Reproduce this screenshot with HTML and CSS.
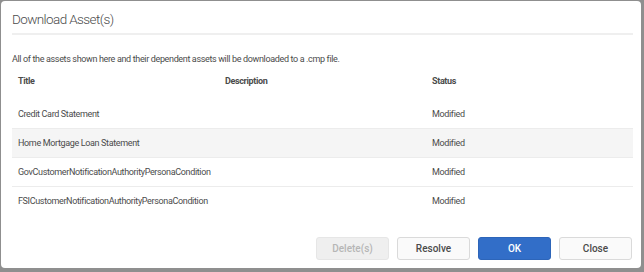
FILE: index.html
```html
<!DOCTYPE html>
<html lang="en">
<head>
    <meta charset="UTF-8">
    <meta name="viewport" content="width=device-width, initial-scale=1.0">
    <title>Download Asset(s)</title>
    <link rel="stylesheet" href="styles.css">
</head>
<body>
    <div class="dialog">
        <div class="dialog-header">
            <h2>Download Asset(s)</h2>
        </div>

        <p class="intro">All of the assets shown here and their dependent assets will be downloaded to a .cmp file.</p>

        <!-- Asset list -->
        <table class="asset-table">
            <thead>
                <tr>
                    <th>Title</th>
                    <th>Description</th>
                    <th>Status</th>
                </tr>
            </thead>
            <tbody>
                <tr>
                    <td>Credit Card Statement</td>
                    <td></td>
                    <td>Modified</td>
                </tr>
                <tr class="odd">
                    <td>Home Mortgage Loan Statement</td>
                    <td></td>
                    <td>Modified</td>
                </tr>
                <tr>
                    <td>GovCustomerNotificationAuthorityPersonaCondition</td>
                    <td></td>
                    <td>Modified</td>
                </tr>
                <tr class="last">
                    <td>FSICustomerNotificationAuthorityPersonaCondition</td>
                    <td></td>
                    <td>Modified</td>
                </tr>
            </tbody>
        </table>

        <div class="dialog-footer">
            <button class="btn" disabled>Delete(s)</button>
            <button class="btn">Resolve</button>
            <button class="btn btn-primary">OK</button>
            <button class="btn">Close</button>
        </div>
    </div>
</body>
</html>
```

FILE: styles.css
```css
html, body {
    margin: 0;
    height: 100%;
}
body {
    background: #8f8f8f;
    font-family: Roboto, "Noto Sans", sans-serif;
    color: #4b4b4b;
    padding: 1px 0 0 1px;
    box-sizing: border-box;
}
.dialog {
    width: 640px;
    height: 267px;
    background: #fff;
    border-radius: 4px;
    box-sizing: border-box;
    padding: 0 8px 0 11px;
    display: flex;
    flex-direction: column;
}
.dialog-header {
    height: 32px;
    border-bottom: 2px solid #efefef;
}
.dialog-header h2 {
    margin: 0;
    padding-top: 8px;
    font-size: 13.5px;
    font-weight: 300;
    letter-spacing: -0.6px;
    line-height: 20px;
    color: #4b4b4b;
}
.intro {
    margin: 17px 0 0;
    font-size: 9px;
    letter-spacing: -0.35px;
    line-height: 14px;
}
.asset-table {
    width: 100%;
    table-layout: fixed;
    border-collapse: collapse;
    font-size: 9px;
    letter-spacing: -0.35px;
    margin-top: 8px;
}
.asset-table th {
    text-align: left;
    font-weight: 700;
    height: 26px;
    padding: 0 6px;
    vertical-align: top;
    line-height: 14px;
}
.asset-table td {
    height: 28px;
    padding: 0 6px;
    border-bottom: 1px solid #ececec;
    line-height: 14px;
}
.asset-table tr.odd td {
    background: #f5f5f5;
}
.asset-table tr.last td {
    border-bottom: none;
}
.dialog-footer {
    margin-top: auto;
    margin-bottom: 8px;
    display: flex;
    justify-content: flex-end;
    gap: 8px;
    padding-right: 1px;
}
.btn {
    width: 73px;
    height: 23px;
    font-family: inherit;
    font-size: 10px;
    font-weight: 500;
    color: #4b4b4b;
    background: #fafafa;
    border: 1px solid #dadada;
    border-radius: 3px;
    padding: 0;
}
.btn:disabled {
    color: #b6b6b6;
    background: #efefef;
    border-color: #e6e6e6;
}
.btn-primary {
    background: #326ec8;
    border-color: #2d65b9;
    color: #fff;
}
```
